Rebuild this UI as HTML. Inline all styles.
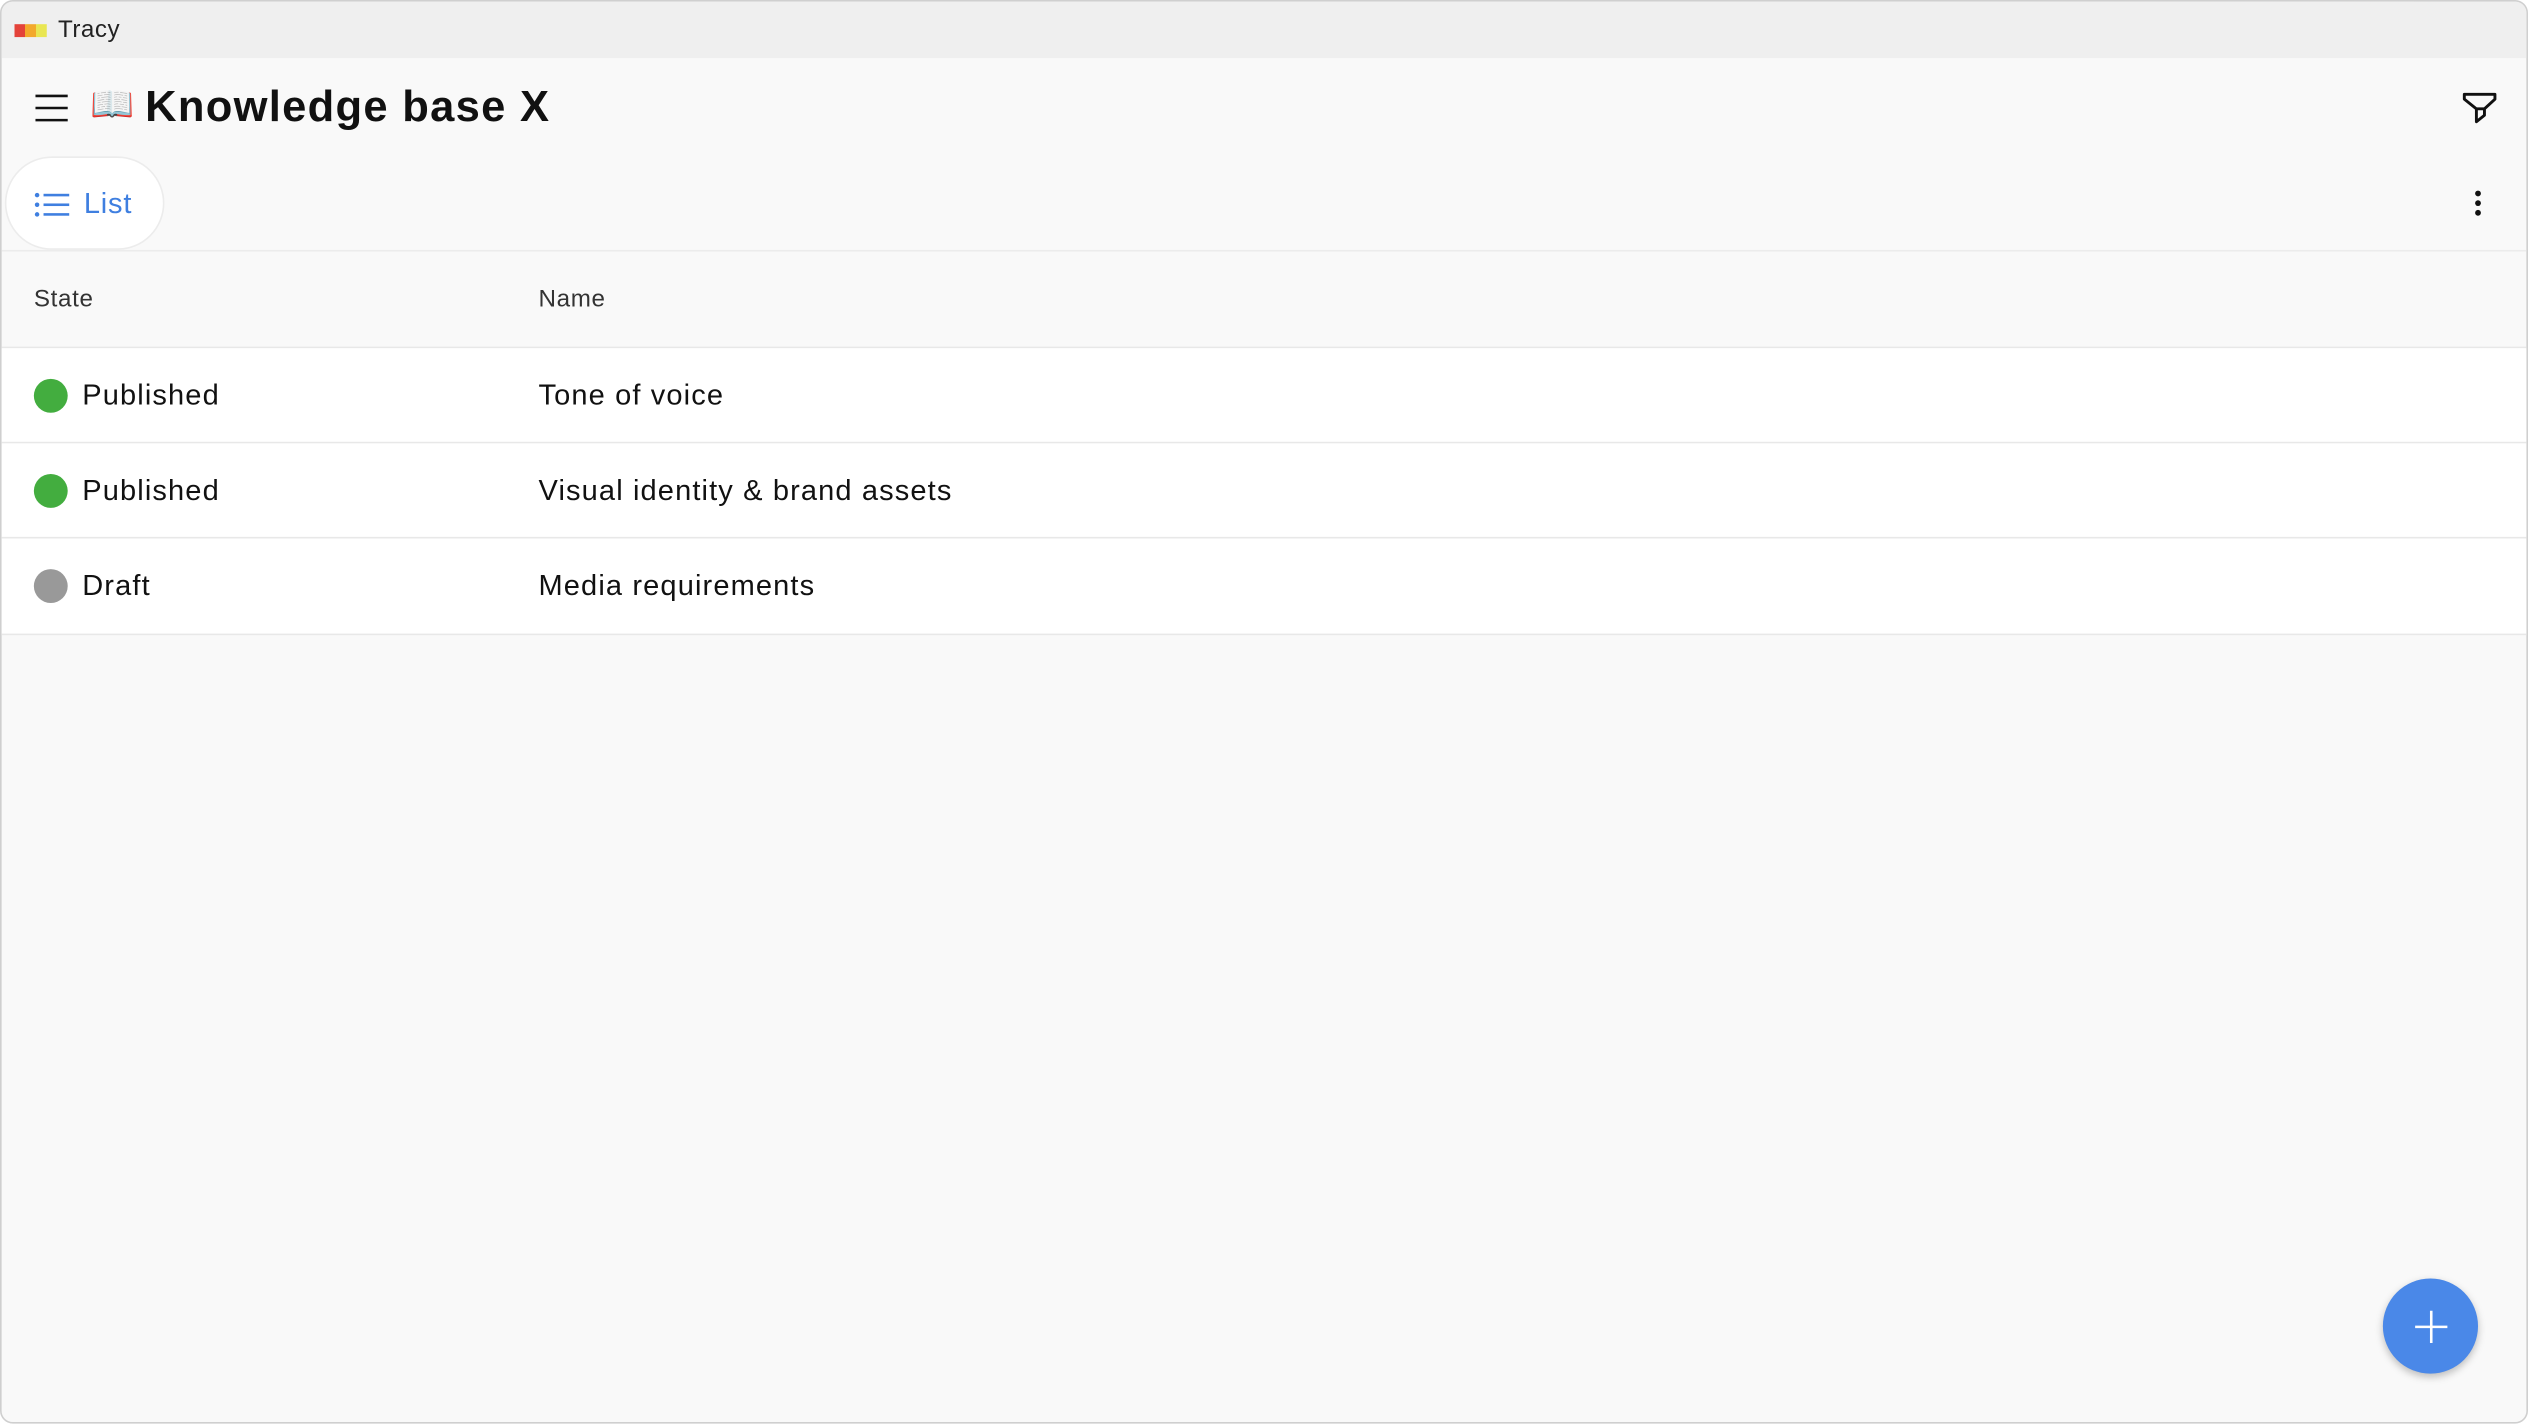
<!DOCTYPE html>
<html><head><meta charset="utf-8"><style>
html,body{margin:0;padding:0;width:2528px;height:1424px;overflow:hidden;background:#fff}
#w{position:absolute;left:0;top:0;width:1568px;height:883px;transform:scale(1.61224);transform-origin:0 0;font-family:"Liberation Sans",sans-serif;color:#111}
.win{position:absolute;left:0;top:0;width:1566px;height:881px;border:1px solid #cfcfcf;border-radius:8px;background:#f9f9f9;overflow:hidden}
.tb{position:absolute;left:0;top:0;right:0;height:35px;background:#efefef}
.abs{position:absolute}
.row{position:absolute;left:0;right:0;height:59px;box-sizing:border-box;border-bottom:1px solid #e8e8e8;background:#fff}
.dot{position:absolute;left:20px;top:19px;width:21px;height:21px;border-radius:50%}
.t{position:absolute;font-size:18px;top:19px;letter-spacing:0.7px}
</style></head><body><div id="w"><div class="win">
<div class="tb">
 <div class="abs" style="left:8px;top:14px;width:20px;height:8px;background:linear-gradient(90deg,#e4433a 0 33%,#f3a92b 33% 66%,#e9e652 66%)"></div>
 <div class="abs" style="left:35px;top:9px;font-size:15px;color:#222;letter-spacing:0.3px">Tracy</div>
</div>
<svg class="abs" style="left:20px;top:57px" width="22" height="20"><path d="M1 1.5H21M1 9H21M1 16.5H21" stroke="#111" stroke-width="1.6"/></svg>
<div class="abs" style="left:55px;top:51px;font-size:22px">📖</div>
<div class="abs" style="left:89px;top:50px;font-size:27px;font-weight:bold;letter-spacing:0.8px">Knowledge base X</div>
<svg class="abs" style="left:1526px;top:56px" width="22" height="22"><path d="M1.5 1.5H20.5V4.5L14 10.5V14.5L9 18.5V10.5L1.5 4.5Z M9 10.5H14" fill="none" stroke="#111" stroke-width="1.8" stroke-linejoin="round"/></svg>
<div class="abs" style="left:2px;top:96px;width:99px;height:58px;border-radius:29px;background:#fff;border:1px solid #ececec;box-sizing:border-box"></div>
<svg class="abs" style="left:20px;top:118px" width="22" height="16"><g fill="#3f7fe0"><circle cx="2" cy="2" r="1.4"/><circle cx="2" cy="8" r="1.4"/><circle cx="2" cy="14" r="1.4"/><rect x="6" y="1.2" width="16" height="1.6"/><rect x="6" y="7.2" width="16" height="1.6"/><rect x="6" y="13.2" width="16" height="1.6"/></g></svg>
<div class="abs" style="left:51px;top:115px;font-size:18px;color:#3f7fe0;letter-spacing:0.5px">List</div>
<svg class="abs" style="left:1532px;top:116px" width="8" height="20"><g fill="#111"><circle cx="4" cy="3" r="1.8"/><circle cx="4" cy="9" r="1.8"/><circle cx="4" cy="15" r="1.8"/></g></svg>
<div class="abs" style="left:0;right:0;top:154px;height:61px;box-sizing:border-box;border-top:1px solid #ececec;border-bottom:1px solid #e8e8e8"></div>
<div class="abs" style="left:20px;top:176px;font-size:15px;color:#333;letter-spacing:0.4px">State</div>
<div class="abs" style="left:333px;top:176px;font-size:15px;color:#333;letter-spacing:0.4px">Name</div>
<div class="row" style="top:215px"><div class="dot" style="background:#43ad3f"></div><div class="t" style="left:50px">Published</div><div class="t" style="left:333px">Tone of voice</div></div>
<div class="row" style="top:274px"><div class="dot" style="background:#43ad3f"></div><div class="t" style="left:50px">Published</div><div class="t" style="left:333px">Visual identity &amp; brand assets</div></div>
<div class="row" style="top:333px;height:60px"><div class="dot" style="background:#999"></div><div class="t" style="left:50px">Draft</div><div class="t" style="left:333px">Media requirements</div></div>
<div class="abs" style="left:1477px;top:792px;width:59px;height:59px;border-radius:50%;background:#4a88e8;box-shadow:0 2px 5px rgba(0,0,0,.25)"></div>
<svg class="abs" style="left:1496px;top:811px" width="22" height="22"><path d="M11 1V21M1 11H21" stroke="#fff" stroke-width="1.6"/></svg>
</div></div></body></html>
